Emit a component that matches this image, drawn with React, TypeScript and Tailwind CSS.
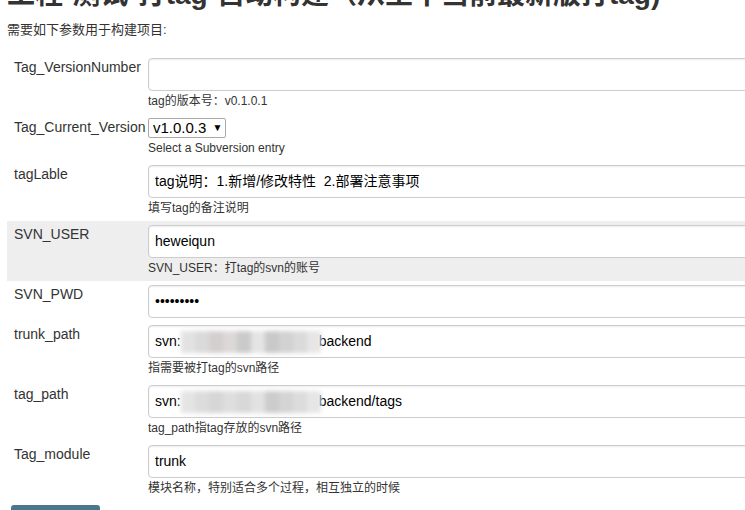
import React from "react";

type Row = {
  label: string;
  kind: "input" | "select" | "password" | "mosaic";
  value?: string;
  pre?: string;
  post?: string;
  blocks?: string[];
  desc?: string;
  shaded?: boolean;
};

const rows: Row[] = [
  { label: "Tag_VersionNumber", kind: "input", value: "", desc: "tag的版本号：v0.1.0.1" },
  { label: "Tag_Current_Version", kind: "select", value: "v1.0.0.3", desc: "Select a Subversion entry" },
  { label: "tagLable", kind: "input", value: "tag说明：1.新增/修改特性  2.部署注意事项", desc: "填写tag的备注说明" },
  { label: "SVN_USER", kind: "input", value: "heweiqun", desc: "SVN_USER：打tag的svn的账号", shaded: true },
  { label: "SVN_PWD", kind: "password", value: "•••••••••" },
  {
    label: "trunk_path",
    kind: "mosaic",
    pre: "svn:",
    post: "backend",
    blocks: ["#e2e2e2", "#dadada", "#d3cfcf", "#dcd8d8", "#cacaca", "#e4e4e4", "#c9c9c9", "#d2d2d2", "#dadada", "#e6e6e6"],
    desc: "指需要被打tag的svn路径",
  },
  {
    label: "tag_path",
    kind: "mosaic",
    pre: "svn:",
    post: "backend/tags",
    blocks: ["#e4e4e4", "#dcdcdc", "#d6d6d6", "#dedede", "#d8d8d8", "#e2e2e2", "#cccccc", "#d4d4d4", "#dcdcdc", "#e6e6e6"],
    desc: "tag_path指tag存放的svn路径",
  },
  { label: "Tag_module", kind: "input", value: "trunk", desc: "模块名称，特别适合多个过程，相互独立的时候" },
];

function Field({ row }: { row: Row }) {
  if (row.kind === "select") {
    return (
      <div className="flex h-[20px] w-[78px] items-center border border-[#a9a9a9] rounded-[2px] bg-white pl-[4px] text-[15px] leading-[18px] text-black">
        <span>{row.value}</span>
        <span className="ml-[6px] text-[10px]">▼</span>
      </div>
    );
  }
  return (
    <div className="flex h-[33px] items-center rounded-[4px] border border-[#cccccc] bg-white px-[6px] text-[14px] text-black shadow-[inset_0_1px_2px_rgba(0,0,0,0.08)] whitespace-pre">
      {row.kind === "mosaic" ? (
        <>
          <span>{row.pre}</span>
          <span className="flex h-[22px] blur-[2px]">
            {row.blocks!.map((c, i) => (
              <span key={i} className="block h-full w-[14px]" style={{ backgroundColor: c }} />
            ))}
          </span>
          <span className="-ml-[2px]">{row.post}</span>
        </>
      ) : (
        <span>{row.value}</span>
      )}
    </div>
  );
}

export default function App() {
  return (
    <div className="relative h-[510px] w-[745px] overflow-hidden bg-white font-['Liberation_Sans','Noto_Sans_CJK_SC',sans-serif] text-[#333333]">
      <div className="pl-[7px]">
        <h1 className="-mt-[22px] whitespace-nowrap text-[28px] font-bold leading-[34px] text-[#333333]">
          工程-测试-打tag-自动构建（从主干当前最新版打tag)
        </h1>
        <p className="mt-[10px] text-[13px] leading-[16px]">需要如下参数用于构建项目:</p>
        <div className="mt-[16px] w-[900px]">
          {rows.map((row) => (
            <div key={row.label} className={`flex pt-[4px] pb-[3px] ${row.shaded ? "bg-[#eeeeee]" : ""}`}>
              <div className="w-[141px] shrink-0 pl-[7px] pt-[1px] text-[14px] leading-[16px] whitespace-nowrap">
                {row.label}
              </div>
              <div className="flex flex-1 flex-col">
                <Field row={row} />
                {row.desc && <div className="h-[20px] text-[12px] leading-[20px] text-[#333333]">{row.desc}</div>}
              </div>
            </div>
          ))}
        </div>
        <div className="mt-[4px] ml-[4px] h-[30px] w-[89px] rounded-[3px] bg-[#4b778c]" />
      </div>
    </div>
  );
}
